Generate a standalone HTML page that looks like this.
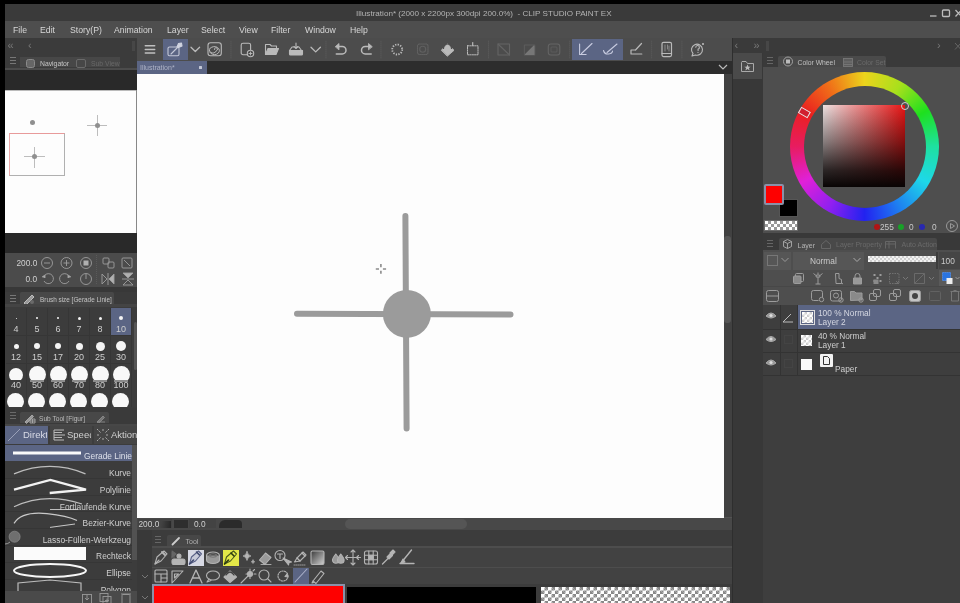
<!DOCTYPE html>
<html><head><meta charset="utf-8">
<style>
*{margin:0;padding:0;box-sizing:border-box}
html,body{width:960px;height:603px;overflow:hidden;background:#000}
body{position:relative;filter:blur(0.3px);font-family:"Liberation Sans",sans-serif;color:#d0d0d0}
.a{position:absolute}
.t{position:absolute;white-space:nowrap;line-height:1}
</style></head><body>
<!-- title bar -->
<div class="a" style="left:5px;top:4px;width:955px;height:17px;background:#3a3a3a"></div>
<div class="t" style="left:356px;top:9.6px;font-size:8.1px;color:#b4b4b4">Illustration* (2000 x 2200px 300dpi 200.0%)&nbsp; - CLIP STUDIO PAINT EX</div>
<svg class="a" style="left:925px;top:5px" width="35" height="16" viewBox="925 5 35 16" fill="none" stroke="#bdbdbd" stroke-width="1.3"><path d="M930 16h6.5"/><rect x="942.5" y="10" width="7" height="6.5" rx="1"/><path d="M955.5 10l6 6.5M961.5 10l-6 6.5"/></svg>
<!-- menubar -->
<div class="a" style="left:5px;top:21px;width:955px;height:17px;background:#4e4e4e"></div>
<div id="menu">
<div class="t" style="left:13px;top:26px;font-size:8.7px;color:#d6d6d6">File</div>
<div class="t" style="left:40px;top:26px;font-size:8.7px;color:#d6d6d6">Edit</div>
<div class="t" style="left:70px;top:26px;font-size:8.7px;color:#d6d6d6">Story(P)</div>
<div class="t" style="left:114px;top:26px;font-size:8.7px;color:#d6d6d6">Animation</div>
<div class="t" style="left:167px;top:26px;font-size:8.7px;color:#d6d6d6">Layer</div>
<div class="t" style="left:201px;top:26px;font-size:8.7px;color:#d6d6d6">Select</div>
<div class="t" style="left:239px;top:26px;font-size:8.7px;color:#d6d6d6">View</div>
<div class="t" style="left:271px;top:26px;font-size:8.7px;color:#d6d6d6">Filter</div>
<div class="t" style="left:305px;top:26px;font-size:8.7px;color:#d6d6d6">Window</div>
<div class="t" style="left:350px;top:26px;font-size:8.7px;color:#d6d6d6">Help</div>
</div>

<!-- LEFT PANEL -->
<div class="a" style="left:5px;top:38px;width:132px;height:565px;background:#3b3b3b"></div>
<div class="t" style="left:7.5px;top:40px;font-size:11px;color:#777">&laquo;</div>
<div class="t" style="left:28px;top:40px;font-size:11px;color:#777">&lsaquo;</div>
<div class="a" style="left:132px;top:41px;width:3px;height:10px;background:#474747"></div>
<div class="a" style="left:10px;top:57px;width:6px;height:7px;border-top:1px solid #777;border-bottom:1px solid #777"><div class="a" style="left:0;top:2px;width:6px;height:1px;background:#777"></div></div>
<div class="a" style="left:20px;top:57px;width:100px;height:10px;background:#474747"></div>
<div class="a" style="left:25.5px;top:59px;width:9.5px;height:9px;border:1px solid #8a8a8a;border-radius:2.5px;background:#666"></div>
<div class="t" style="left:40px;top:60.5px;font-size:6.8px;color:#c4c4c4">Navigator</div>
<div class="a" style="left:76px;top:59px;width:10px;height:9px;border:1.2px solid #6a6a6a;border-radius:2px"></div>
<div class="t" style="left:91px;top:60.5px;font-size:6.8px;color:#686868">Sub View</div>
<div class="a" style="left:5px;top:68px;width:132px;height:2px;background:#4c4c4c"></div>
<div class="a" style="left:5px;top:70px;width:132px;height:20px;background:#292929"></div>
<!-- navigator -->
<div class="a" style="left:5px;top:90px;width:131px;height:143px;background:#fdfdfd;border-top:1px solid #bbb"></div>
<div class="a" style="left:30px;top:120px;width:5px;height:5px;border-radius:50%;background:#8f8f8f"></div>
<div class="a" style="left:87px;top:124.5px;width:20px;height:1px;background:#bdbdbd"></div>
<div class="a" style="left:97px;top:115px;width:1px;height:21px;background:#bdbdbd"></div>
<div class="a" style="left:95px;top:123px;width:5px;height:5px;border-radius:50%;background:#8f8f8f"></div>
<div class="a" style="left:9px;top:133px;width:56px;height:43px;border:1px solid #b0b0b0;border-top:1px solid #e89a9a;border-left:1px solid #eaa8a8"></div>
<div class="a" style="left:24px;top:156px;width:21px;height:1px;background:#bdbdbd"></div>
<div class="a" style="left:34px;top:147px;width:1px;height:21px;background:#bdbdbd"></div>
<div class="a" style="left:32px;top:154px;width:5px;height:5px;border-radius:50%;background:#8f8f8f"></div>
<div class="a" style="left:136px;top:90px;width:1px;height:143px;background:#888"></div>
<div class="a" style="left:5px;top:233px;width:132px;height:20px;background:#292929"></div>
<!-- zoom controls -->
<div class="a" style="left:5px;top:253px;width:132px;height:34px;background:#4b4b4b"></div>
<div class="t" style="left:16.5px;top:258.5px;font-size:8.3px;color:#d0d0d0">200.0</div>
<div class="t" style="left:25.5px;top:274.5px;font-size:8.3px;color:#d0d0d0">0.0</div>
<svg class="a" style="left:5px;top:253px" width="132" height="34" viewBox="0 0 132 34" fill="none" stroke="#9e9e9e" stroke-width="0.9">
<circle cx="42" cy="10" r="5.5"/><path d="M39 10h6"/>
<circle cx="61.5" cy="10" r="5.5"/><path d="M58.5 10h6M61.5 7v6"/>
<circle cx="81" cy="10" r="5.5"/><rect x="78.5" y="7.5" width="5" height="5" fill="#b0b0b0" stroke="none"/>
<path d="M91.5 2v30" stroke="#5c5c5c" stroke-dasharray="1 1"/>
<rect x="98" y="5" width="6" height="6" rx="1"/><rect x="103" y="9" width="6" height="6" rx="1"/>
<rect x="117" y="5" width="10" height="10" rx="1"/><path d="M119 7l6 6"/>
<path d="M40 22a5 5 0 1 1 -1 6"/><path d="M37 24l3 -2l0 3" fill="#b0b0b0"/>
<path d="M63 22a5 5 0 1 0 1 6"/><path d="M66 24l-3 -2l0 3" fill="#b0b0b0"/>
<circle cx="81" cy="26" r="5.5"/><path d="M81 21v5"/>
<path d="M97 21l5 5l-5 5z"/><path d="M109 21l-5 5l5 5z" fill="#b0b0b0"/><path d="M103 20v12"/>
<path d="M117 26h12"/><path d="M118 20h10l-5 5z" fill="#b0b0b0"/><path d="M118 32h10l-5 -5z"/>
</svg>
<div class="a" style="left:5px;top:287px;width:132px;height:5px;background:#383838"></div>
<!-- brush size tab -->
<div class="a" style="left:10px;top:295px;width:6px;height:7px;border-top:1px solid #777;border-bottom:1px solid #777"><div class="a" style="left:0;top:2px;width:6px;height:1px;background:#777"></div></div>
<div class="a" style="left:20px;top:292px;width:94px;height:12px;background:#484848;border-radius:2px 2px 0 0"></div>
<svg class="a" style="left:23px;top:293px" width="12" height="11" viewBox="0 0 12 11" fill="none" stroke="#bbb"><path d="M1 10l8-8l2 2l-8 8z" fill="#999"/><circle cx="9" cy="9" r="2" fill="#6a6a6a" stroke="none"/></svg>
<div class="t" style="left:40px;top:296.5px;font-size:6.4px;color:#c4c4c4">Brush size [Gerade Linie]</div>
<div class="a" style="left:5px;top:304px;width:132px;height:3px;background:#444"></div>
<!-- brush grid -->
<div class="a" style="left:5px;top:307px;width:132px;height:100px;background:#3c3c3c;overflow:hidden">
<div class="a" style="left:1px;top:1px;width:21px;height:28px;border-right:1px solid #363636;border-bottom:1px solid #363636;background:transparent"></div>
<div class="a" style="left:22px;top:1px;width:21px;height:28px;border-right:1px solid #363636;border-bottom:1px solid #363636;background:transparent"></div>
<div class="a" style="left:43px;top:1px;width:21px;height:28px;border-right:1px solid #363636;border-bottom:1px solid #363636;background:transparent"></div>
<div class="a" style="left:64px;top:1px;width:21px;height:28px;border-right:1px solid #363636;border-bottom:1px solid #363636;background:transparent"></div>
<div class="a" style="left:85px;top:1px;width:21px;height:28px;border-right:1px solid #363636;border-bottom:1px solid #363636;background:transparent"></div>
<div class="a" style="left:106px;top:1px;width:21px;height:28px;border-right:1px solid #363636;border-bottom:1px solid #363636;background:#5b6584"></div>
<div class="a" style="left:1px;top:29px;width:21px;height:28px;border-right:1px solid #363636;border-bottom:1px solid #363636;background:transparent"></div>
<div class="a" style="left:22px;top:29px;width:21px;height:28px;border-right:1px solid #363636;border-bottom:1px solid #363636;background:transparent"></div>
<div class="a" style="left:43px;top:29px;width:21px;height:28px;border-right:1px solid #363636;border-bottom:1px solid #363636;background:transparent"></div>
<div class="a" style="left:64px;top:29px;width:21px;height:28px;border-right:1px solid #363636;border-bottom:1px solid #363636;background:transparent"></div>
<div class="a" style="left:85px;top:29px;width:21px;height:28px;border-right:1px solid #363636;border-bottom:1px solid #363636;background:transparent"></div>
<div class="a" style="left:106px;top:29px;width:21px;height:28px;border-right:1px solid #363636;border-bottom:1px solid #363636;background:transparent"></div>
<div class="a" style="left:1px;top:57px;width:21px;height:28px;border-right:1px solid #363636;border-bottom:1px solid #363636;background:transparent"></div>
<div class="a" style="left:22px;top:57px;width:21px;height:28px;border-right:1px solid #363636;border-bottom:1px solid #363636;background:transparent"></div>
<div class="a" style="left:43px;top:57px;width:21px;height:28px;border-right:1px solid #363636;border-bottom:1px solid #363636;background:transparent"></div>
<div class="a" style="left:64px;top:57px;width:21px;height:28px;border-right:1px solid #363636;border-bottom:1px solid #363636;background:transparent"></div>
<div class="a" style="left:85px;top:57px;width:21px;height:28px;border-right:1px solid #363636;border-bottom:1px solid #363636;background:transparent"></div>
<div class="a" style="left:106px;top:57px;width:21px;height:28px;border-right:1px solid #363636;border-bottom:1px solid #363636;background:transparent"></div>
<div class="a" style="left:1px;top:85px;width:21px;height:28px;border-right:1px solid #363636;border-bottom:1px solid #363636;background:transparent"></div>
<div class="a" style="left:22px;top:85px;width:21px;height:28px;border-right:1px solid #363636;border-bottom:1px solid #363636;background:transparent"></div>
<div class="a" style="left:43px;top:85px;width:21px;height:28px;border-right:1px solid #363636;border-bottom:1px solid #363636;background:transparent"></div>
<div class="a" style="left:64px;top:85px;width:21px;height:28px;border-right:1px solid #363636;border-bottom:1px solid #363636;background:transparent"></div>
<div class="a" style="left:85px;top:85px;width:21px;height:28px;border-right:1px solid #363636;border-bottom:1px solid #363636;background:transparent"></div>
<div class="a" style="left:106px;top:85px;width:21px;height:28px;border-right:1px solid #363636;border-bottom:1px solid #363636;background:transparent"></div>
<div class="a" style="left:11px;top:11px;width:1px;height:1px;border-radius:50%;background:#f4f4f4"></div>
<div class="t" style="left:-4px;top:18px;width:30px;text-align:center;font-size:9px;color:#cfcfcf">4</div>
<div class="a" style="left:31px;top:10px;width:2px;height:2px;border-radius:50%;background:#f4f4f4"></div>
<div class="t" style="left:17px;top:18px;width:30px;text-align:center;font-size:9px;color:#cfcfcf">5</div>
<div class="a" style="left:52px;top:10px;width:2px;height:2px;border-radius:50%;background:#f4f4f4"></div>
<div class="t" style="left:38px;top:18px;width:30px;text-align:center;font-size:9px;color:#cfcfcf">6</div>
<div class="a" style="left:73px;top:10px;width:3px;height:3px;border-radius:50%;background:#f4f4f4"></div>
<div class="t" style="left:59px;top:18px;width:30px;text-align:center;font-size:9px;color:#cfcfcf">7</div>
<div class="a" style="left:94px;top:10px;width:3px;height:3px;border-radius:50%;background:#f4f4f4"></div>
<div class="t" style="left:80px;top:18px;width:30px;text-align:center;font-size:9px;color:#cfcfcf">8</div>
<div class="a" style="left:114px;top:9px;width:4px;height:4px;border-radius:50%;background:#f4f4f4"></div>
<div class="t" style="left:101px;top:18px;width:30px;text-align:center;font-size:9px;color:#cfcfcf">10</div>
<div class="a" style="left:9px;top:37px;width:5px;height:5px;border-radius:50%;background:#f4f4f4"></div>
<div class="t" style="left:-4px;top:46px;width:30px;text-align:center;font-size:9px;color:#cfcfcf">12</div>
<div class="a" style="left:29px;top:36px;width:6px;height:6px;border-radius:50%;background:#f4f4f4"></div>
<div class="t" style="left:17px;top:46px;width:30px;text-align:center;font-size:9px;color:#cfcfcf">15</div>
<div class="a" style="left:50px;top:36px;width:6px;height:6px;border-radius:50%;background:#f4f4f4"></div>
<div class="t" style="left:38px;top:46px;width:30px;text-align:center;font-size:9px;color:#cfcfcf">17</div>
<div class="a" style="left:71px;top:36px;width:7px;height:7px;border-radius:50%;background:#f4f4f4"></div>
<div class="t" style="left:59px;top:46px;width:30px;text-align:center;font-size:9px;color:#cfcfcf">20</div>
<div class="a" style="left:91px;top:35px;width:9px;height:9px;border-radius:50%;background:#f4f4f4"></div>
<div class="t" style="left:80px;top:46px;width:30px;text-align:center;font-size:9px;color:#cfcfcf">25</div>
<div class="a" style="left:111px;top:34px;width:10px;height:10px;border-radius:50%;background:#f4f4f4"></div>
<div class="t" style="left:101px;top:46px;width:30px;text-align:center;font-size:9px;color:#cfcfcf">30</div>
<div class="a" style="left:4px;top:61px;width:14px;height:14px;border-radius:50%;background:#f8f8f8"></div>
<div class="a" style="left:2px;top:86px;width:17px;height:17px;border-radius:50%;background:#f8f8f8"></div>
<div class="a" style="left:24px;top:59px;width:17px;height:17px;border-radius:50%;background:#f8f8f8"></div>
<div class="a" style="left:23px;top:86px;width:17px;height:17px;border-radius:50%;background:#f8f8f8"></div>
<div class="a" style="left:45px;top:59px;width:17px;height:17px;border-radius:50%;background:#f8f8f8"></div>
<div class="a" style="left:44px;top:86px;width:17px;height:17px;border-radius:50%;background:#f8f8f8"></div>
<div class="a" style="left:66px;top:59px;width:17px;height:17px;border-radius:50%;background:#f8f8f8"></div>
<div class="a" style="left:65px;top:86px;width:17px;height:17px;border-radius:50%;background:#f8f8f8"></div>
<div class="a" style="left:87px;top:59px;width:17px;height:17px;border-radius:50%;background:#f8f8f8"></div>
<div class="a" style="left:86px;top:86px;width:17px;height:17px;border-radius:50%;background:#f8f8f8"></div>
<div class="a" style="left:108px;top:59px;width:17px;height:17px;border-radius:50%;background:#f8f8f8"></div>
<div class="a" style="left:107px;top:86px;width:17px;height:17px;border-radius:50%;background:#f8f8f8"></div>
<div class="a" style="left:1px;top:73px;width:20px;height:13px;background:#3c3c3c"></div>
<div class="t" style="left:-4px;top:74px;width:30px;text-align:center;font-size:9px;color:#cfcfcf">40</div>
<div class="a" style="left:22px;top:73px;width:20px;height:13px;background:#3c3c3c"></div>
<div class="t" style="left:17px;top:74px;width:30px;text-align:center;font-size:9px;color:#cfcfcf">50</div>
<div class="a" style="left:43px;top:73px;width:20px;height:13px;background:#3c3c3c"></div>
<div class="t" style="left:38px;top:74px;width:30px;text-align:center;font-size:9px;color:#cfcfcf">60</div>
<div class="a" style="left:64px;top:73px;width:20px;height:13px;background:#3c3c3c"></div>
<div class="t" style="left:59px;top:74px;width:30px;text-align:center;font-size:9px;color:#cfcfcf">70</div>
<div class="a" style="left:85px;top:73px;width:20px;height:13px;background:#3c3c3c"></div>
<div class="t" style="left:80px;top:74px;width:30px;text-align:center;font-size:9px;color:#cfcfcf">80</div>
<div class="a" style="left:106px;top:73px;width:20px;height:13px;background:#3c3c3c"></div>
<div class="t" style="left:101px;top:74px;width:30px;text-align:center;font-size:9px;color:#cfcfcf">100</div>
<div class="a" style="left:25px;top:73px;width:14px;height:2px;background:#8c8c8c"></div>
<div class="a" style="left:46px;top:73px;width:14px;height:2px;background:#8c8c8c"></div>
<div class="a" style="left:67px;top:73px;width:14px;height:2px;background:#8c8c8c"></div>
<div class="a" style="left:88px;top:73px;width:14px;height:2px;background:#8c8c8c"></div>
<div class="a" style="left:109px;top:73px;width:14px;height:2px;background:#8c8c8c"></div>
<div class="a" style="left:128.5px;top:15px;width:3px;height:48px;background:#555;border-radius:2px"></div>
</div>
<!-- sub tool -->
<div class="a" style="left:5px;top:408px;width:132px;height:18px;background:#3a3a3a"></div>
<div class="a" style="left:10px;top:412px;width:6px;height:7px;border-top:1px solid #6a6a6a;border-bottom:1px solid #6a6a6a"><div class="a" style="left:0;top:2px;width:6px;height:1px;background:#6a6a6a"></div></div>
<div class="a" style="left:20px;top:412px;width:89px;height:11px;background:#484848;border-radius:2px 2px 0 0"></div>
<svg class="a" style="left:24px;top:413px" width="12" height="11" viewBox="0 0 12 11" fill="none" stroke="#aaa" stroke-width="0.9"><path d="M1 9l7-7l1.5 1.5l-7 7z" fill="#999"/><path d="M6 6h5v4h-5zM6 8h5M8.5 6v4"/></svg>
<div class="t" style="left:39px;top:416px;font-size:6.6px;color:#bababa">Sub Tool [Figur]</div>
<svg class="a" style="left:96px;top:413px" width="10" height="10" viewBox="0 0 10 10" fill="none" stroke="#888" stroke-width="0.9"><path d="M1 9l6-6l1.5 1.5l-6 6z" fill="#777"/><path d="M1 9h8"/></svg>
<div class="a" style="left:5px;top:424px;width:132px;height:2px;background:#474747"></div>
<div class="a" style="left:5px;top:426px;width:132px;height:18px;background:#3d3d3d"></div>
<div class="a" style="left:5px;top:426px;width:43px;height:18px;background:#5b6584"></div>
<svg class="a" style="left:7px;top:428px" width="14" height="14" viewBox="0 0 14 14"><path d="M1 13L13 1" stroke="#9aa0b8" stroke-width="1"/></svg>
<div class="a" style="left:23px;top:430px;width:24px;height:12px;overflow:hidden"><div class="t" style="left:0;top:0;font-size:9.5px;color:#d8dae6">Direkt</div></div>
<div class="a" style="left:50px;top:426px;width:42px;height:18px;background:#454545"></div>
<svg class="a" style="left:52px;top:428px" width="14" height="14" viewBox="0 0 14 14" fill="none" stroke="#bbb" stroke-width="1"><path d="M2 2h10M2 4.5h8M2 7h11M2 9.5h8M2 12h10M2 2v10"/></svg>
<div class="a" style="left:67px;top:430px;width:24px;height:12px;overflow:hidden"><div class="t" style="left:0;top:0;font-size:9.5px;color:#d0d0d0">Speed</div></div>
<div class="a" style="left:94px;top:426px;width:43px;height:18px;background:#454545"></div>
<svg class="a" style="left:96px;top:428px" width="14" height="14" viewBox="0 0 14 14" fill="none" stroke="#aaa" stroke-width="1" stroke-dasharray="2 1"><path d="M1 1L5 5M13 1L9 5M1 13L5 9M13 13L9 9M7 1v3M7 10v3M1 7h3M10 7h3"/></svg>
<div class="a" style="left:111px;top:430px;width:26px;height:12px;overflow:hidden"><div class="t" style="left:0;top:0;font-size:9.5px;color:#d0d0d0">Aktion</div></div>
<!-- list -->
<div class="a" style="left:5px;top:444px;width:132px;height:147px;background:#3c3c3c;overflow:hidden">
<div class="a" style="left:0;top:1px;width:127px;height:16px;background:#5b6584"></div>
<div class="a" style="left:0;top:34px;width:127px;height:1px;background:#363636"></div>
<div class="a" style="left:0;top:51px;width:127px;height:1px;background:#363636"></div>
<div class="a" style="left:0;top:67px;width:127px;height:1px;background:#363636"></div>
<div class="a" style="left:0;top:84px;width:127px;height:1px;background:#363636"></div>
<div class="a" style="left:0;top:101px;width:127px;height:1px;background:#363636"></div>
<div class="a" style="left:0;top:118px;width:127px;height:1px;background:#363636"></div>
<div class="a" style="left:0;top:135px;width:127px;height:1px;background:#363636"></div>
<div class="a" style="left:127px;top:1px;width:5px;height:115px;background:#525252"></div>
<svg class="a" style="left:0;top:0" width="127" height="147" viewBox="5 444 127 147" fill="none">
<path d="M13 453h68" stroke="#fafafa" stroke-width="3"/>
<path d="M14 473.8Q50 459 85.5 473.8" stroke="#bdbdbd" stroke-width="1.3"/>
<path d="M14 489.6L50.4 480L86 489.6L49.7 493" stroke="#f2f2f2" stroke-width="2.3" stroke-linejoin="miter"/>
<path d="M14 506.8Q45 492 82 504" stroke="#bdbdbd" stroke-width="1.2"/><path d="M50 509.5h28" stroke="#bdbdbd" stroke-width="1"/>
<path d="M14 523.3Q22 511 47 513.6Q67 515.5 77 520.5" stroke="#c8c8c8" stroke-width="1.2"/><path d="M50 527.4L75 524" stroke="#c8c8c8" stroke-width="1"/>
<circle cx="14.6" cy="536.7" r="5.5" fill="#6f6f6f" stroke="#888" stroke-width="0.8"/><path d="M10 542q-2 2 -5 2" stroke="#999"/>
<rect x="14" y="547" width="72" height="13" fill="#fbfbfb"/>
<ellipse cx="50" cy="570.5" rx="36" ry="6.5" stroke="#f6f6f6" stroke-width="2"/>
<path d="M18 595V583L50 580L81 583V595" stroke="#bbb" stroke-width="1.2"/>
</svg>
<div class="t" style="left:0;top:8px;width:127px;text-align:right;font-size:8.4px;color:#dde0ea">Gerade Linie</div>
<div class="t" style="left:0;top:25px;width:126px;text-align:right;font-size:8.4px;color:#cfcfcf">Kurve</div>
<div class="t" style="left:0;top:41.5px;width:126px;text-align:right;font-size:8.4px;color:#cfcfcf">Polylinie</div>
<div class="t" style="left:0;top:58.5px;width:126px;text-align:right;font-size:8.4px;color:#cfcfcf">Fortlaufende Kurve</div>
<div class="t" style="left:0;top:75px;width:126px;text-align:right;font-size:8.4px;color:#cfcfcf">Bezier-Kurve</div>
<div class="t" style="left:0;top:91.5px;width:126px;text-align:right;font-size:8.4px;color:#cfcfcf">Lasso-F&uuml;llen-Werkzeug</div>
<div class="t" style="left:0;top:108px;width:126px;text-align:right;font-size:8.4px;color:#cfcfcf">Rechteck</div>
<div class="t" style="left:0;top:125px;width:126px;text-align:right;font-size:8.4px;color:#cfcfcf">Ellipse</div>
<div class="t" style="left:0;top:142px;width:126px;text-align:right;font-size:8.4px;color:#cfcfcf">Polygon</div>
</div>
<div class="a" style="left:5px;top:591px;width:132px;height:12px;background:#4a4a4a"></div>
<svg class="a" style="left:80px;top:592px" width="57" height="11" viewBox="0 0 57 11" fill="none" stroke="#999" stroke-width="0.9"><rect x="2.5" y="2.5" width="9" height="9"/><path d="M7 3v5M5 6l2 2l2-2"/><rect x="20" y="1.5" width="8" height="8"/><rect x="23" y="4.5" width="8" height="8"/><path d="M27 6.5v4M25 8.5h4"/><rect x="42" y="2.5" width="8" height="10" rx="1"/><path d="M41 2h10"/></svg>
<!-- CANVAS AREA -->
<div class="a" style="left:137px;top:38px;width:595px;height:23px;background:#4c4c4c"></div>
<div class="a" style="left:163px;top:39px;width:25px;height:21px;background:#5b6584"></div>
<div class="a" style="left:572px;top:39px;width:51px;height:21px;background:#5b6584"></div>
<svg class="a" style="left:137px;top:38px" width="595" height="23" viewBox="137 38 595 23" fill="none" stroke="#bababa" stroke-width="1.1" stroke-linecap="round" stroke-linejoin="round">
<path d="M145.3 45.8h9.4M145.3 49.5h9.4M145.3 52.9h9.4" stroke-width="1.5" stroke="#c0c0c0"/>
<rect x="168" y="47" width="11" height="8.7" rx="1.5" stroke="#c4c8d8"/><path d="M171 54l8-8" stroke="#c4c8d8"/><path d="M177 47l1.5-3.5l3-.5l.5 3l-3.5 1.5z" fill="#d0d4e0" stroke="#d0d4e0"/>
<path d="M191 47.2l4.3 4.3l4.3-4.3" stroke-width="1.3"/>
<rect x="208" y="42.7" width="13.3" height="13" rx="2.5"/><path d="M214.5 49.5a1.5 1.5 0 1 1 1.8 1.2a3.5 3 0 1 1 -4.5 -3.5a5 4 0 1 1 -2 5" stroke-width="1"/>
<path d="M231 41v17" stroke="#5a5a5a" stroke-width="0.8" stroke-dasharray="1 1"/>
<path d="M247.5 54.7h-4.5a1.8 1.8 0 0 1 -1.8 -1.8v-7.9a1.8 1.8 0 0 1 1.8 -1.8h5.8a1.8 1.8 0 0 1 1.8 1.8v4.5"/><circle cx="250.5" cy="53.5" r="3.2"/><path d="M249 53.5h3M250.5 52v3" stroke-width="0.9"/>
<path d="M265.5 54.5v-10h4.5l1.5 1.5h5v3"/><path d="M265.5 54.5l2.5-6h10.5l-2.5 6z" fill="#bababa"/>
<path d="M289.5 50.5l2.5-3.5h2M301.5 50.5l-2.5-3.5h-2"/><path d="M289.5 50.5h13v3.5a1 1 0 0 1 -1 1h-11a1 1 0 0 1 -1 -1z" fill="#bababa"/><path d="M296 43v5.5M294 46.5l2 2l2-2"/>
<path d="M311 47.2l4.7 4.7l4.7-4.7" stroke-width="1.3"/>
<path d="M326 41v17" stroke="#5a5a5a" stroke-width="0.8" stroke-dasharray="1 1"/>
<path d="M339 46.5h3.3a3.7 3.7 0 0 1 0 7.4h-6" stroke-width="1.5"/><path d="M335.5 46.5l3.5-3v6z" fill="#bababa" stroke-width="0.8"/>
<path d="M368.5 46.5h-3.3a3.7 3.7 0 0 0 0 7.4h6" stroke-width="1.5"/><path d="M372 46.5l-3.5-3v6z" fill="#bababa" stroke-width="0.8"/>
<path d="M381 41v17" stroke="#5a5a5a" stroke-width="0.8" stroke-dasharray="1 1"/>
<circle cx="397.2" cy="49.5" r="5" stroke-width="1.8" stroke-dasharray="1.3 1.3" stroke-linecap="butt"/>
<rect x="417.5" y="44" width="10.5" height="10.5" rx="2" stroke="#626262" stroke-dasharray="1 1"/><circle cx="422.7" cy="49.2" r="3" stroke="#606060"/>
<path d="M441.5 50l6 -6l6.5 6.3l-6.5 5.7z" fill="#bababa" stroke-width="0.9"/><path d="M443.5 48.5a4 4.5 0 0 1 8 0" stroke="#4c4c4c" stroke-width="1.2"/><path d="M441.8 50.3q3 -1.5 5.5 0t6.5 0" stroke="#4c4c4c" stroke-width="0"/>
<rect x="467.5" y="45.8" width="10.5" height="9" stroke-dasharray="1.4 1" stroke-width="1"/><path d="M472.7 42.5v3" stroke-width="1.2"/>
<path d="M488.5 41v17" stroke="#5a5a5a" stroke-width="0.8" stroke-dasharray="1 1"/>
<rect x="498" y="44" width="11.5" height="11" stroke="#646464"/><path d="M498 44l11.5 11" stroke="#646464"/>
<rect x="524.4" y="45" width="10.4" height="10" stroke="#5c5c5c"/><path d="M525.5 54.5h8.5v-8.5z" fill="#777" stroke="#777"/>
<rect x="548.3" y="44" width="11.5" height="11" rx="2.5" stroke="#646464"/><rect x="551" y="47" width="6" height="5" rx="1" stroke="#5a5a5a"/>
<path d="M569.7 41v17" stroke="#5a5a5a" stroke-width="0.8" stroke-dasharray="1 1"/>
<path d="M579.6 44v10.5h6.5M581.5 53.5l10.5-10" stroke="#c8cce0"/>
<path d="M603.5 50.5q1 4 5 3.5t4-3M607 52.5l10-8.5" stroke="#c8cce0"/>
<path d="M631 50v4h10.8M631 50h4.5M635.5 50l6-6.5" stroke-width="1.2"/>
<path d="M651.7 41v17" stroke="#5a5a5a" stroke-width="0.8" stroke-dasharray="1 1"/>
<rect x="662" y="42.3" width="9.5" height="14.3" rx="1.5" stroke-width="1.2"/><path d="M662 53.5h9.5" stroke-width="1.2"/><path d="M665 45v6M667.5 45v4M669 46v5" stroke="#999" stroke-width="0.8"/>
<path d="M681.9 41v17" stroke="#5a5a5a" stroke-width="0.8" stroke-dasharray="1 1"/>
<path d="M693 53.5a5.5 5.5 0 1 1 2.5 1.5l-3.5 1z" stroke-width="1.1"/><path d="M695.8 47.3a1.8 1.8 0 1 1 2.3 1.8v1.3M698 52.2v.3" stroke-width="1.1"/><circle cx="703" cy="44" r="0.9" fill="#ccc" stroke="none"/>
</svg>
<!-- tab row -->
<div class="a" style="left:137px;top:61px;width:595px;height:13px;background:#2d2d2d"></div>
<div class="a" style="left:137px;top:61px;width:70px;height:13px;background:#5b6584"></div>
<div class="t" style="left:140px;top:64px;font-size:7px;color:#aeb3c6">Illustration*</div>
<div class="a" style="left:198.5px;top:65.5px;width:3.5px;height:3.5px;background:#c4c8d6;border-radius:0.5px"></div>
<svg class="a" style="left:717px;top:62px" width="12" height="10" viewBox="0 0 12 10" fill="none" stroke="#bbb" stroke-width="1.2"><path d="M2 3l4 4l4-4"/></svg>
<!-- canvas -->
<div class="a" style="left:137px;top:74px;width:587px;height:444px;background:#fdfdfd"></div>
<svg class="a" style="left:137px;top:74px" width="587" height="444" viewBox="137 74 587 444" fill="none" stroke="#9b9b9b" stroke-width="6" stroke-linecap="round">
<path d="M405.4 216L406.6 428.5"/>
<path d="M297 313.8L510.5 314.5"/>
<circle cx="406.9" cy="313.9" r="24" fill="#9b9b9b" stroke="none"/>
<path d="M375.8 269h3.2M382.9 269h3.2M380.9 264v3.2M380.9 270.8v3" stroke="#8a8a8a" stroke-width="1.6" stroke-linecap="butt"/>
</svg>
<div class="a" style="left:724px;top:74px;width:8px;height:456px;background:#414141"></div>
<div class="a" style="left:724px;top:236px;width:7px;height:87px;background:#565656;border-radius:3px"></div>
<div class="a" style="left:724px;top:517px;width:8px;height:13px;background:#535353"></div>
<!-- status bar -->
<div class="a" style="left:137px;top:518px;width:595px;height:12px;background:#484848"></div>
<div class="a" style="left:138px;top:519px;width:34px;height:9px;background:#434343"></div>
<div class="t" style="left:138.5px;top:520px;font-size:8.3px;color:#cfcfcf">200.0</div>
<div class="a" style="left:159px;top:521px;width:12px;height:7px;background:linear-gradient(100deg,#434343 20%,#262626)"></div>
<div class="a" style="left:174px;top:519.5px;width:14px;height:8.5px;background:#2e2e2e"></div>
<div class="a" style="left:189px;top:519px;width:27px;height:9px;background:#434343"></div>
<div class="t" style="left:194px;top:520px;font-size:8.3px;color:#cfcfcf">0.0</div>
<div class="a" style="left:219px;top:519.5px;width:23px;height:8.5px;background:#2b2b2b;border-radius:6px 4px 0 0"></div>
<div class="a" style="left:345px;top:519px;width:122px;height:10px;background:#555;border-radius:5px"></div>
<!-- tool panel -->
<div class="a" style="left:137px;top:530px;width:595px;height:73px;background:#3c3c3c"></div>
<div class="a" style="left:137px;top:530px;width:15px;height:73px;background:#393939"></div>
<svg class="a" style="left:139px;top:572px" width="12" height="30" viewBox="0 0 12 30" fill="none" stroke="#777" stroke-width="1"><path d="M3 3l3 3l3-3M3 24l3 3l3-3"/></svg>
<!-- tool icons -->
<div class="a" style="left:155px;top:536px;width:6px;height:7px;border-top:1px solid #666;border-bottom:1px solid #666"><div class="a" style="left:0;top:2px;width:6px;height:1px;background:#666"></div></div>
<div class="a" style="left:167px;top:535px;width:34px;height:11px;background:#474747;border-radius:2px 2px 0 0"></div>
<svg class="a" style="left:171px;top:536px" width="11" height="10" viewBox="0 0 11 10"><path d="M1.5 8.5L8 2" stroke="#ccc" stroke-width="1.8" stroke-linecap="round"/></svg>
<div class="t" style="left:185.5px;top:537.5px;font-size:7px;color:#b0b0b0">Tool</div>
<div class="a" style="left:152px;top:546px;width:580px;height:38px;background:#424242"></div>
<div class="a" style="left:152px;top:546px;width:580px;height:1.5px;background:#4d4d4d"></div>
<div class="a" style="left:152px;top:566.5px;width:580px;height:1.5px;background:#4d4d4d"></div>
<div class="a" style="left:188px;top:550px;width:15.5px;height:16px;background:#d7d9e4"></div>
<div class="a" style="left:223px;top:550px;width:15.5px;height:16px;background:#e4e848"></div>
<div class="a" style="left:293px;top:567.5px;width:16px;height:16.5px;background:#5b6584"></div>
<svg class="a" style="left:152px;top:546px" width="580" height="40" viewBox="152 546 580 40" fill="none" stroke="#b4b4b4" stroke-width="1.1" stroke-linejoin="round" stroke-linecap="round">
<defs><linearGradient id="gr" x1="0" y1="0" x2="1" y2="1"><stop offset="0" stop-color="#3a3a3a"/><stop offset="1" stop-color="#d0d0d0"/></linearGradient></defs>
<path d="M155 564l2-7l7-6l3 3l-6 7z"/><path d="M155 564l4-4"/><path d="M162 552l3 3" stroke-width="2"/>
<path d="M172 552v6M174 553v5" stroke="#666"/><path d="M172 551l4 3l-4 3" fill="#666" stroke="#666"/><rect x="172" y="559" width="13" height="5.5" rx="2" fill="#b4b4b4"/><circle cx="179" cy="556" r="2" fill="#b4b4b4"/>
<path d="M189.5 564l2-7l7-6l3 3l-6 7z" stroke="#5a6288" fill="#c7cad8"/><path d="M189.5 564l4-4M196.5 552l3 3" stroke="#404a70" stroke-width="1.6"/>
<ellipse cx="213" cy="555.5" rx="6.5" ry="3.5"/><path d="M206.5 555.5v4.5a6.5 3.5 0 0 0 13 0v-4.5" fill="#999"/><ellipse cx="213" cy="555.5" rx="3.5" ry="1.7" stroke="#777"/>
<path d="M224.5 564l2-7l7-6l3 3l-6 7z" stroke="#4a5a1a"/><path d="M224.5 564l4-4M231 553l3 3" stroke="#2a3a10" stroke-width="1.6"/>
<path d="M247 551.5q.8 4 4 4.5q-3.2.5-4 4.5q-.8-4-4-4.5q3.2-.5 4-4.5z" fill="#b4b4b4" stroke-width="0.7"/><path d="M253 560q.4 1.6 1.8 1.8q-1.4.3-1.8 1.8q-.4-1.5-1.8-1.8q1.4-.2 1.8-1.8z" fill="#b4b4b4" stroke-width="0.6"/>
<path d="M259.5 560l6-7l5.5 4.5l-6 7z" fill="#999"/><path d="M261 564.5h10" stroke-width="0.9"/>
<circle cx="280" cy="555.5" r="5"/><path d="M277.5 554h5M280 554v4.5"/><path d="M283 558l5.5 7l.6-2.6l2.4-.4z" fill="#b4b4b4"/>
<path d="M294.5 562l2.5-4l6-6l3 3l-6 6z"/><path d="M297 558l3 3M302 553l3 3" stroke-width="1.4"/><path d="M294 565h12" stroke-dasharray="1 1" stroke-width="0.8"/>
<rect x="311" y="551" width="13" height="13.5" rx="1.5" fill="url(#gr)"/>
<path d="M332.5 560a3.3 3.3 0 0 0 6.6 0q0-2-3.3-6q-3.3 4-3.3 6z" fill="#999"/><path d="M337.5 560a3.3 3.3 0 0 0 6.6 0q0-2-3.3-6q-3.3 4-3.3 6z" fill="#aaa"/>
<path d="M353 550v15M345.5 557.5h15M351 552l2-2l2 2M351 563l2 2l2-2M347.5 555.5l-2 2l2 2M358.5 555.5l-2 2l2 2"/>
<rect x="364.5" y="551" width="13" height="13" rx="2"/><path d="M364.5 555.3h13M364.5 559.7h13M368.8 551v13M373.2 551v13"/><rect x="368.8" y="555.3" width="4.4" height="4.4" fill="#b4b4b4"/>
<path d="M382.5 564l8-8" stroke-width="1.3"/><path d="M387 557l3.5-3.5l2 2l-3.5 3.5z" fill="#b4b4b4"/><path d="M390 553l3-3l2 2l-3 3z" fill="#b4b4b4"/>
<path d="M400 563.5h14M401 563l10.5-13" stroke-width="1.4"/><path d="M401 563l2-4l2 3z" fill="#b4b4b4"/>
<rect x="155" y="570" width="12" height="12" rx="1"/><path d="M155 574h12M161 574v8M161 578h6"/>
<path d="M172 583l11-12h-11z"/><path d="M174.5 578l4-4h-4z"/>
<path d="M190 583l6-13l6 13M192.5 578h7" stroke-width="1.3"/>
<ellipse cx="213" cy="575.5" rx="6.5" ry="4.5"/><path d="M209 579l-2 3l4-1.5"/>
<path d="M224 577l6-6l6.5 6l-6.5 5.5z" fill="#b4b4b4"/><path d="M226 575q4-6 8 0" stroke="#424242" stroke-width="1.3"/>
<path d="M241 583l7-7"/><circle cx="250" cy="574" r="2.5" fill="#b4b4b4"/><path d="M250 569v2M254 574h2M253 571l1.5-1.5M246 574h1.5M250 577v1.5"/>
<circle cx="264" cy="575" r="5"/><path d="M268 579l3 3"/>
<circle cx="283" cy="576" r="5" stroke-dasharray="1.5 1.2"/><path d="M287 574l1 3l-3-.5z" fill="#b4b4b4"/>
<path d="M295 582l12-13" stroke="#aab0c8"/>
<path d="M313 581l8-10l3 2.5l-8 10z"/><path d="M313 581l-1 2l2-.5"/>
</svg>
<!-- swatches -->
<div class="a" style="left:152px;top:584px;width:193px;height:19px;background:#8a90a8"></div>
<div class="a" style="left:154px;top:586px;width:189px;height:17px;background:#fe0000"></div>
<div class="a" style="left:347px;top:587px;width:189px;height:16px;background:#000"></div>
<div class="a" style="left:541px;top:587px;width:189px;height:16px;background-color:#fff;background-image:linear-gradient(45deg,#888 25%,transparent 25%,transparent 75%,#888 75%),linear-gradient(45deg,#888 25%,transparent 25%,transparent 75%,#888 75%);background-size:7px 7px;background-position:0 0,3.5px 3.5px"></div>
<!-- RIGHT DOCK -->
<div class="a" style="left:732px;top:38px;width:228px;height:565px;background:#383838"></div>
<div class="a" style="left:732px;top:38px;width:1px;height:565px;background:#2e2e2e"></div>
<div class="a" style="left:733px;top:38px;width:227px;height:15px;background:#3a3a3a"></div>
<div class="t" style="left:734.5px;top:40px;font-size:11px;color:#777">&lsaquo;</div>
<div class="t" style="left:753.5px;top:40px;font-size:11px;color:#777">&raquo;</div>
<div class="a" style="left:766px;top:41px;width:3px;height:10px;background:#474747"></div>
<div class="t" style="left:937px;top:40px;font-size:11px;color:#777">&rsaquo;</div>
<svg class="a" style="left:954px;top:42px" width="6" height="8" viewBox="0 0 6 8" stroke="#6a6a6a" stroke-width="0.9"><path d="M1 1l6 6.5M7 1l-6 6.5"/></svg>
<div class="a" style="left:733px;top:53px;width:29px;height:26px;background:#4a4a4a"></div>
<svg class="a" style="left:740px;top:59px" width="15" height="14" viewBox="0 0 15 14" fill="none" stroke="#aaa" stroke-width="1"><path d="M1.5 3.5v9h12v-8h-6l-1.5-2h-4z"/><path d="M7.5 5.5l1 2.2h2.2l-1.8 1.4l.7 2.3l-2.1-1.4l-2.1 1.4l.7-2.3l-1.8-1.4h2.2z" fill="#bbb" stroke="none"/></svg>
<!-- color wheel panel -->
<div class="a" style="left:763px;top:53px;width:197px;height:14px;background:#3a3a3a"></div>
<div class="a" style="left:767px;top:57px;width:6px;height:7px;border-top:1px solid #666;border-bottom:1px solid #666"><div class="a" style="left:0;top:2px;width:6px;height:1px;background:#666"></div></div>
<div class="a" style="left:778px;top:56px;width:108px;height:11px;background:#4a4a4a;border-radius:2px 2px 0 0"></div>
<svg class="a" style="left:782px;top:56px" width="12" height="11" viewBox="0 0 12 11" fill="none" stroke="#aaa" stroke-width="0.9"><circle cx="6" cy="5.5" r="4.5"/><rect x="4" y="3.5" width="4" height="4" fill="#bbb" stroke="none"/></svg>
<div class="t" style="left:797.5px;top:60px;font-size:6.8px;color:#c0c0c0">Color Wheel</div>
<svg class="a" style="left:842px;top:57px" width="12" height="11" viewBox="0 0 12 11" fill="none" stroke="#777" stroke-width="0.9"><rect x="1.5" y="1.5" width="9" height="8" fill="#5e5e5e"/><path d="M1.5 5h9M1.5 7.5h9" stroke="#777"/></svg>
<div class="t" style="left:857px;top:60px;font-size:6.8px;color:#6a6a6a">Color Set</div>
<div class="a" style="left:763px;top:67px;width:197px;height:166px;background:#4e4e4e"></div>
<div class="a" style="left:789.9px;top:71.9px;width:149.2px;height:149.2px;border-radius:50%;background:conic-gradient(from 0deg,#ecd41c 0deg,#a8e01c 30deg,#1ee01e 60deg,#1ee0a0 90deg,#1ed8e8 120deg,#1e80f0 150deg,#2222f0 180deg,#9020f0 210deg,#e020d8 240deg,#e81c60 270deg,#ea2020 300deg,#f07018 330deg,#ecd41c 360deg)"></div>
<div class="a" style="left:803.5px;top:85.5px;width:122px;height:122px;border-radius:50%;background:#4e4e4e"></div>
<div class="a" style="left:823px;top:105px;width:82px;height:82px;background:linear-gradient(to bottom,rgba(8,4,4,0) 0%,rgba(8,4,4,0.45) 45%,rgba(8,4,4,0.85) 80%,#080404 100%),linear-gradient(to right,#ece2e2,#e81414)"></div>
<div class="a" style="left:901px;top:101.5px;width:8px;height:8px;border-radius:50%;border:1.2px solid #d0d0d0"></div>
<div class="a" style="left:798.5px;top:108.5px;width:11px;height:6.5px;border:1.3px solid #e8e8e8;background:#d02030;transform:rotate(30deg)"></div>
<div class="a" style="left:779px;top:199px;width:19px;height:18px;background:#555"></div>
<div class="a" style="left:780px;top:200px;width:17px;height:16px;background:#000"></div>
<div class="a" style="left:764px;top:184px;width:20px;height:21px;background:#8a90a8;border-radius:2px"></div>
<div class="a" style="left:766px;top:186px;width:16px;height:17px;background:#fe0000"></div>
<div class="a" style="left:764px;top:220px;width:34px;height:11px;background:#6a6a6a"></div>
<div class="a" style="left:765px;top:221px;width:32px;height:9px;background-color:#fff;background-image:linear-gradient(45deg,#999 25%,transparent 25%,transparent 75%,#999 75%),linear-gradient(45deg,#999 25%,transparent 25%,transparent 75%,#999 75%);background-size:6px 6px;background-position:0 0,3px 3px"></div>
<div class="a" style="left:874px;top:224px;width:6px;height:6px;border-radius:50%;background:#b01414"></div>
<div class="t" style="left:880px;top:222.5px;font-size:8.3px;color:#c8c8c8">255</div>
<div class="a" style="left:898px;top:224px;width:6px;height:6px;border-radius:50%;background:#18a028"></div>
<div class="t" style="left:909px;top:222.5px;font-size:8.3px;color:#c8c8c8">0</div>
<div class="a" style="left:919px;top:224px;width:6px;height:6px;border-radius:50%;background:#2828b0"></div>
<div class="t" style="left:932px;top:222.5px;font-size:8.3px;color:#c8c8c8">0</div>
<svg class="a" style="left:945px;top:219px" width="15" height="14" viewBox="0 0 15 14" fill="none" stroke="#999" stroke-width="1"><circle cx="7" cy="7" r="5.5"/><path d="M5.5 4.5l4 2.5l-4 2.5z"/></svg>
<div class="a" style="left:763px;top:233px;width:197px;height:5px;background:#393939"></div>
<!-- layer tabs -->
<div class="a" style="left:763px;top:238px;width:197px;height:12px;background:#393939"></div>
<div class="a" style="left:767px;top:240px;width:6px;height:7px;border-top:1px solid #666;border-bottom:1px solid #666"><div class="a" style="left:0;top:2px;width:6px;height:1px;background:#666"></div></div>
<div class="a" style="left:779px;top:238px;width:158px;height:12px;background:#494949;border-radius:2px 2px 0 0"></div>
<svg class="a" style="left:782px;top:238px" width="11" height="12" viewBox="0 0 11 12" fill="none" stroke="#aaa" stroke-width="0.9"><path d="M5.5 1.5l4 2v5l-4 2l-4-2v-5z M1.5 3.5l4 2l4-2M5.5 5.5v5"/></svg>
<div class="t" style="left:797.5px;top:241.5px;font-size:7px;color:#b4b4b4">Layer</div>
<svg class="a" style="left:820px;top:239px" width="12" height="11" viewBox="0 0 12 11" fill="none" stroke="#6a6a6a" stroke-width="0.9"><path d="M1.5 9.5v-4l4.5-4l4.5 4v4z"/></svg>
<div class="t" style="left:836px;top:241px;font-size:7px;color:#6a6a6a">Layer Property</div>
<svg class="a" style="left:884px;top:239px" width="13" height="11" viewBox="0 0 13 11" fill="none" stroke="#6a6a6a" stroke-width="0.9"><path d="M1.5 9.5v-7h10v7M1.5 5h10M5 2.5v7"/></svg>
<div class="t" style="left:901.5px;top:241px;font-size:7px;color:#6a6a6a">Auto Action</div>
<!-- layer panel controls -->
<div class="a" style="left:763px;top:250px;width:197px;height:55px;background:#4e4e4e"></div>
<div class="a" style="left:764px;top:252px;width:27px;height:17.5px;background:#565656"></div>
<div class="a" style="left:767px;top:255px;width:11px;height:11px;border:1px solid #777"></div>
<svg class="a" style="left:780px;top:256px" width="10" height="8" viewBox="0 0 10 8" fill="none" stroke="#999" stroke-width="1"><path d="M1.5 2l3.5 3.5l3.5-3.5"/></svg>
<div class="a" style="left:793px;top:252px;width:70.5px;height:17.5px;background:#565656"></div>
<div class="t" style="left:810px;top:256.5px;font-size:8.3px;color:#cacaca">Normal</div>
<svg class="a" style="left:852px;top:256px" width="10" height="8" viewBox="0 0 10 8" fill="none" stroke="#aaa" stroke-width="1"><path d="M1.5 2l3.5 3.5l3.5-3.5"/></svg>
<div class="a" style="left:868px;top:255.5px;width:67.5px;height:6.5px;background-color:#f2f2f2;background-image:linear-gradient(45deg,#d0d0d0 25%,transparent 25%,transparent 75%,#d0d0d0 75%),linear-gradient(45deg,#d0d0d0 25%,transparent 25%,transparent 75%,#d0d0d0 75%);background-size:4px 4px;background-position:0 0,2px 2px"></div>
<div class="a" style="left:936px;top:252px;width:2px;height:17px;background:#3c3c3c"></div>
<div class="a" style="left:939px;top:252px;width:21px;height:17px;background:#454545"></div>
<div class="t" style="left:941px;top:256.5px;font-size:8.3px;color:#cacaca">100</div>
<div class="a" style="left:763px;top:286px;width:197px;height:1px;background:#474747"></div>
<div class="a" style="left:939px;top:270px;width:21px;height:16px;background:#5a5a5a"></div>
<svg class="a" style="left:763px;top:270px" width="197" height="35" viewBox="763 270 197 35" fill="none" stroke="#9c9c9c" stroke-width="1" stroke-linejoin="round">
<rect x="795.5" y="273.5" width="8" height="8" rx="1"/><rect x="793.5" y="276" width="7.5" height="7.5" rx="1" fill="#8a8a8a"/>
<path d="M818 277v7M815.5 284h5M816 277h4l-.5-2h-3zM813.5 273.5l2.5 2M822.5 273.5l-2.5 2M818 272.5v2"/>
<path d="M835.5 273.5h3.5v5l2.5 1v4h-5.5zM841 282.5l2 1.5" />
<rect x="853.5" y="278" width="8" height="6" fill="#999"/><path d="M855 278v-2a2.5 2.5 0 0 1 5 0v2"/>
<path d="M873.5 274h2v2h-2zM879.5 274h2v2h-2zM876.5 277h2v2h-2zM873.5 280h2v2h-2zM879.5 280h2v2h-2z" fill="#9c9c9c" stroke="none"/><rect x="873.5" y="279.5" width="5" height="4.5" fill="#8a8a8a" stroke="none"/>
<rect x="889.5" y="273.5" width="9.5" height="10" stroke="#707070" stroke-dasharray="1.5 1"/><path d="M896 281l3 3M899 281l-3 3" stroke="#707070"/><path d="M903 277l2.5 2.5l2.5-2.5" stroke="#787878"/>
<rect x="914.5" y="273.5" width="10" height="10" stroke="#6a6a6a"/><path d="M914.5 283.5l10-10" stroke="#6a6a6a"/><path d="M929 277l2.5 2.5l2.5-2.5" stroke="#787878"/>
<rect x="942.5" y="272.5" width="8" height="8" fill="#2a74e0" stroke="#5090f0" stroke-dasharray="1.2 .8"/><rect x="946.5" y="278" width="6" height="6" fill="#eee" stroke="none"/><path d="M955.5 277l2 2l2-2" stroke="#999"/>
<rect x="766.5" y="290.5" width="12" height="11" rx="2"/><path d="M766.5 296h12"/>
<path d="M822.5 297v-4.5a2 2 0 0 0 -2 -2h-7a2 2 0 0 0 -2 2v6a2 2 0 0 0 2 2h5"/><circle cx="821.5" cy="299.5" r="2.2"/>
<rect x="830.5" y="290.5" width="11" height="10.5" rx="2"/><circle cx="836" cy="295.5" r="2.5"/><circle cx="841" cy="300" r="2.2"/>
<path d="M850.5 300.5v-9h4l1.5 1.5h6v7z" fill="#8a8a8a"/><circle cx="861" cy="300" r="2.2"/>
<rect x="869.5" y="293.5" width="7" height="7" rx="1.5"/><rect x="873.5" y="289.5" width="7" height="7" rx="1.5"/>
<rect x="889.5" y="293.5" width="7" height="7" rx="1.5"/><rect x="893.5" y="289.5" width="7" height="7" rx="1.5"/>
<rect x="909.5" y="290.5" width="11" height="11" rx="2" fill="#c4c4c4"/><circle cx="915" cy="296" r="3" fill="#444" stroke="none"/>
<rect x="929.5" y="291.5" width="11" height="9" rx="1" stroke="#626262"/>
<path d="M950.5 291.5h9M951.5 292v9h7v-9M953.5 290.5h3" stroke="#777"/>
</svg>
<!-- layer list -->
<div class="a" style="left:763px;top:305px;width:197px;height:298px;background:#3e3e3e"></div>
<div class="a" style="left:797px;top:305px;width:163px;height:24px;background:#5b6584"></div>
<div class="a" style="left:763px;top:328.5px;width:197px;height:1px;background:#333"></div>
<div class="a" style="left:763px;top:351.5px;width:197px;height:1px;background:#333"></div>
<div class="a" style="left:763px;top:375px;width:197px;height:1px;background:#333"></div>
<div class="a" style="left:780px;top:305px;width:1px;height:70px;background:#333"></div>
<div class="a" style="left:796.5px;top:305px;width:1px;height:70px;background:#333"></div>
<svg class="a" style="left:763px;top:305px" width="34" height="70" viewBox="763 305 34 70" fill="none" stroke="#aaa" stroke-width="1">
<path d="M766 316q5-6 10 0q-5 4-10 0z" fill="#999"/><circle cx="771" cy="315.5" r="1.6" fill="#ddd" stroke="none"/>
<path d="M766 339.5q5-6 10 0q-5 4-10 0z" fill="#999"/><circle cx="771" cy="339" r="1.6" fill="#ddd" stroke="none"/>
<path d="M766 363q5-6 10 0q-5 4-10 0z" fill="#999"/><circle cx="771" cy="362.5" r="1.6" fill="#ddd" stroke="none"/>
<path d="M783 322h10M783 322l8-8" stroke="#bbb"/>
<rect x="784.5" y="335.5" width="8" height="8" stroke="#444"/>
<rect x="784.5" y="359.5" width="8" height="8" stroke="#444"/>
</svg>
<div class="a" style="left:800px;top:309.5px;width:15px;height:15px;border:1px solid #ddd;background:#5b6584"></div>
<div class="a" style="left:802px;top:311.5px;width:11px;height:11px;background-color:#fff;background-image:linear-gradient(45deg,#ccc 25%,transparent 25%,transparent 75%,#ccc 75%),linear-gradient(45deg,#ccc 25%,transparent 25%,transparent 75%,#ccc 75%);background-size:5px 5px;background-position:0 0,2.5px 2.5px"></div>
<div class="t" style="left:818px;top:309px;font-size:8.3px;color:#d4d7e2">100 % Normal</div>
<div class="t" style="left:818px;top:318px;font-size:8.3px;color:#d4d7e2">Layer 2</div>
<div class="a" style="left:801px;top:335px;width:11px;height:11px;background-color:#fff;background-image:linear-gradient(45deg,#ccc 25%,transparent 25%,transparent 75%,#ccc 75%),linear-gradient(45deg,#ccc 25%,transparent 25%,transparent 75%,#ccc 75%);background-size:5px 5px;background-position:0 0,2.5px 2.5px"></div>
<div class="t" style="left:818px;top:332px;font-size:8.3px;color:#cfcfcf">40 % Normal</div>
<div class="t" style="left:818px;top:341px;font-size:8.3px;color:#cfcfcf">Layer 1</div>
<div class="a" style="left:801px;top:359px;width:11px;height:11px;background:#fafafa"></div>
<div class="a" style="left:820px;top:354px;width:13px;height:13px;background:#f2f2f2;border-radius:1px"></div>
<svg class="a" style="left:820px;top:354px" width="13" height="13" viewBox="0 0 13 13" fill="none" stroke="#333" stroke-width="1"><path d="M3.5 2.5h4l2 2v6h-6z"/></svg>
<div class="t" style="left:835px;top:365px;font-size:8.3px;color:#cfcfcf">Paper</div>
</body></html>
